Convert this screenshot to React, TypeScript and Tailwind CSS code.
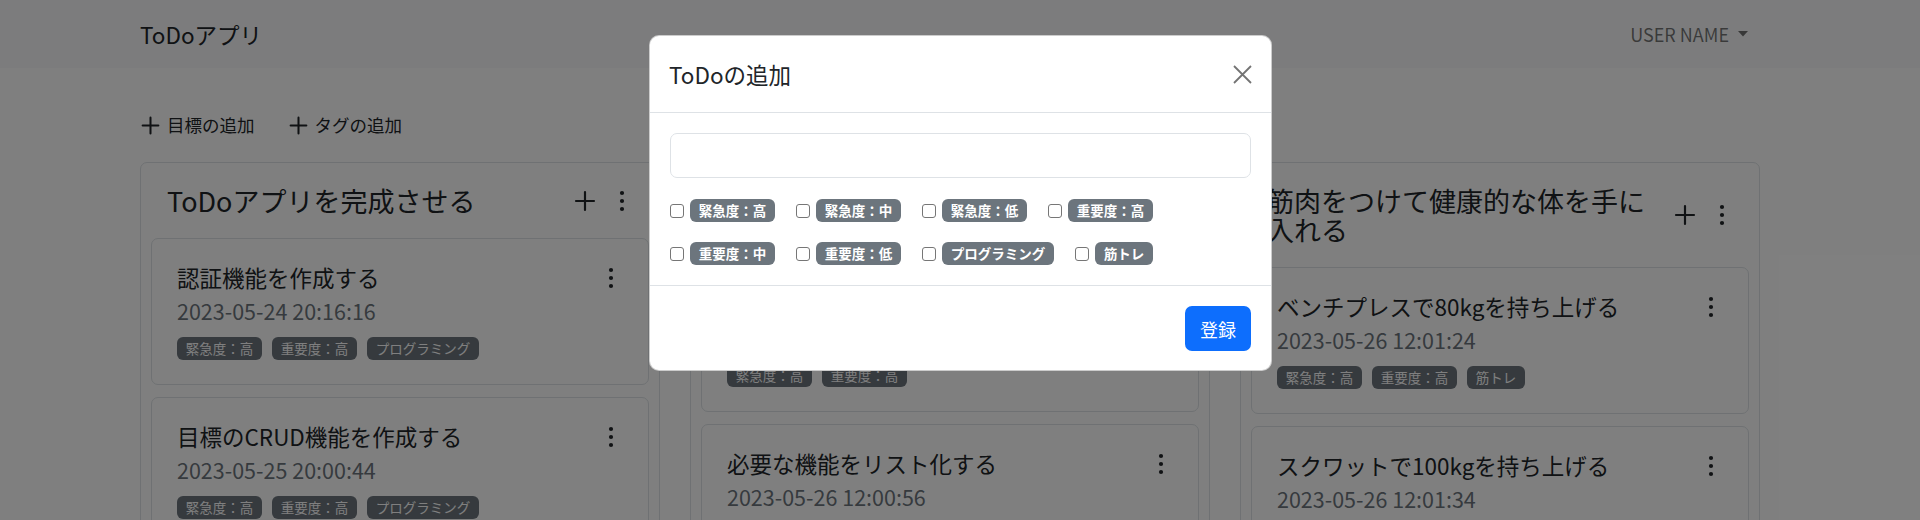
import React from "react";

const PlusIcon = ({ size, sw }: { size: number; sw: number }) => (
  <svg width={size} height={size} viewBox="0 0 16 16" fill="none" stroke="currentColor" strokeWidth={sw} strokeLinecap="round">
    <path d="M8 2v12M2 8h12" />
  </svg>
);

const Kebab = () => (
  <svg width={24} height={24} viewBox="0 0 24 24" fill="currentColor">
    <circle cx="12" cy="4" r="2.1" />
    <circle cx="12" cy="12" r="2.1" />
    <circle cx="12" cy="20" r="2.1" />
  </svg>
);

const Badge = ({ children, bold }: { children: React.ReactNode; bold?: boolean }) => (
  <span
    className={
      bold
        ? "inline-flex h-[23px] items-center rounded-[6px] bg-[#6c757d] px-[8.75px] text-[13.5px] leading-none font-bold text-white whitespace-nowrap"
        : "inline-flex h-[23px] items-center rounded-[6px] bg-[#6c757d] px-[8.75px] text-[13.5px] leading-none font-normal text-white whitespace-nowrap"
    }
  >
    {children}
  </span>
);

type Todo = { title: string; date: string; tags: string[] };
type Goal = { title: string; todos: Todo[] };

const goals: Goal[] = [
  {
    title: "ToDoアプリを完成させる",
    todos: [
      { title: "認証機能を作成する", date: "2023-05-24 20:16:16", tags: ["緊急度：高", "重要度：高", "プログラミング"] },
      { title: "目標のCRUD機能を作成する", date: "2023-05-25 20:00:44", tags: ["緊急度：高", "重要度：高", "プログラミング"] },
    ],
  },
  {
    title: "ToDoアプリの設計をする",
    todos: [
      { title: "画面設計とデータベース設計を行い仕様書を作成する", date: "2023-05-26 12:00:40", tags: ["緊急度：高", "重要度：高"] },
      { title: "必要な機能をリスト化する", date: "2023-05-26 12:00:56", tags: ["緊急度：中", "重要度：高"] },
    ],
  },
  {
    title: "筋肉をつけて健康的な体を手に入れる",
    todos: [
      { title: "ベンチプレスで80kgを持ち上げる", date: "2023-05-26 12:01:24", tags: ["緊急度：高", "重要度：高", "筋トレ"] },
      { title: "スクワットで100kgを持ち上げる", date: "2023-05-26 12:01:34", tags: ["緊急度：高", "重要度：高", "筋トレ"] },
    ],
  },
];

const modalTags = ["緊急度：高", "緊急度：中", "緊急度：低", "重要度：高", "重要度：中", "重要度：低", "プログラミング", "筋トレ"];

function TodoCard({ todo }: { todo: Todo }) {
  return (
    <div className="rounded-[7px] border border-[#dee2e6] bg-white pt-[25px] pl-[25px] pr-[25px] pb-[24px]">
      <div className="flex items-start justify-between gap-[10px]">
        <div className="text-[22.5px] leading-[27px] font-normal text-[#212529]">{todo.title}</div>
        <div className="flex h-[27px] shrink-0 items-center text-[#212529]">
          <Kebab />
        </div>
      </div>
      <div className="mt-[5px] text-[21.5px] leading-[30px] text-[#6c757d]">{todo.date}</div>
      <div className="mt-[11px] flex gap-[10px]">
        {todo.tags.map((t) => (
          <Badge key={t}>{t}</Badge>
        ))}
      </div>
    </div>
  );
}

function GoalColumn({ goal }: { goal: Goal }) {
  return (
    <div className="rounded-[7px] border border-[#dee2e6] bg-white">
      <div className="flex items-center pl-[26px] pr-[25px] py-[23px]">
        <div className="flex-1 pr-[14px] text-[27px] leading-[29px] font-normal text-[#212529]">{goal.title}</div>
        <div className="flex shrink-0 items-center gap-[13px] text-[#212529]">
          <PlusIcon size={24} sw={1.45} />
          <Kebab />
        </div>
      </div>
      <div className="flex flex-col gap-[12px] px-[10px] pb-[10px]">
        {goal.todos.map((t) => (
          <TodoCard key={t.title} todo={t} />
        ))}
      </div>
    </div>
  );
}

export default function App() {
  return (
    <div className="relative h-[520px] w-full overflow-hidden bg-white font-['Noto_Sans_CJK_JP',sans-serif] text-[#212529]">
      <nav className="h-[68px] bg-[#f8f9fa]">
        <div className="ml-[125px] flex h-full w-[1650px] items-center justify-between px-[15px]">
          <span className="text-[22.5px] leading-[34px] text-[#212529]">ToDoアプリ</span>
          <div className="flex items-center pr-[12px] text-[18px] leading-[27px] text-black/55">
            <span>USER NAME</span>
            <svg className="ml-[9px]" width="10" height="6" viewBox="0 0 10 6" fill="currentColor">
              <path d="M0 0h10L5 5.5z" />
            </svg>
          </div>
        </div>
      </nav>

      <main className="ml-[125px] w-[1650px] px-[15px]">
        <div className="mt-[38px] flex h-[38px] items-center gap-[33px] text-[17.5px] text-[#212529]">
          <button className="flex items-center gap-[6px]">
            <PlusIcon size={21} sw={1.55} />
            <span>目標の追加</span>
          </button>
          <button className="flex items-center gap-[6px]">
            <PlusIcon size={21} sw={1.55} />
            <span>タグの追加</span>
          </button>
        </div>
        <div className="mt-[18px] grid grid-cols-3 items-start gap-[30px]">
          {goals.map((g) => (
            <GoalColumn key={g.title} goal={g} />
          ))}
        </div>
      </main>

      <div className="absolute inset-0 bg-black/50" />

      <div className="absolute left-[649px] top-[35px] w-[623px] overflow-hidden rounded-[10px] border border-black/20 bg-white">
        <div className="flex h-[77px] items-center justify-between border-b border-[#dee2e6] px-[19px]">
          <div className="text-[22.5px] leading-[34px] font-normal text-[#212529]">ToDoの追加</div>
          <svg width="19" height="19" viewBox="0 0 19 19" fill="none" stroke="currentColor" strokeWidth="1.8" className="text-black/55">
            <path d="M1 1l17 17M18 1L1 18" />
          </svg>
        </div>
        <div className="p-[20px]">
          <input className="block h-[45px] w-full rounded-[7px] border border-[#dee2e6] bg-white px-[15px] text-[18px] outline-none" />
          <div className="mt-[21px] flex flex-wrap gap-x-[21px] gap-y-[20px]">
            {modalTags.map((t) => (
              <label key={t} className="flex items-center gap-[6px]">
                <span className="block h-[14px] w-[14px] rounded-[3px] border border-[#767676] bg-white" />
                <Badge bold>{t}</Badge>
              </label>
            ))}
          </div>
        </div>
        <div className="flex justify-end border-t border-[#dee2e6] px-[20px] pt-[20px] pb-[19px]">
          <button className="h-[45px] rounded-[7px] bg-[#0d6efd] px-[15px] text-[18px] leading-none text-white">登録</button>
        </div>
      </div>
    </div>
  );
}
